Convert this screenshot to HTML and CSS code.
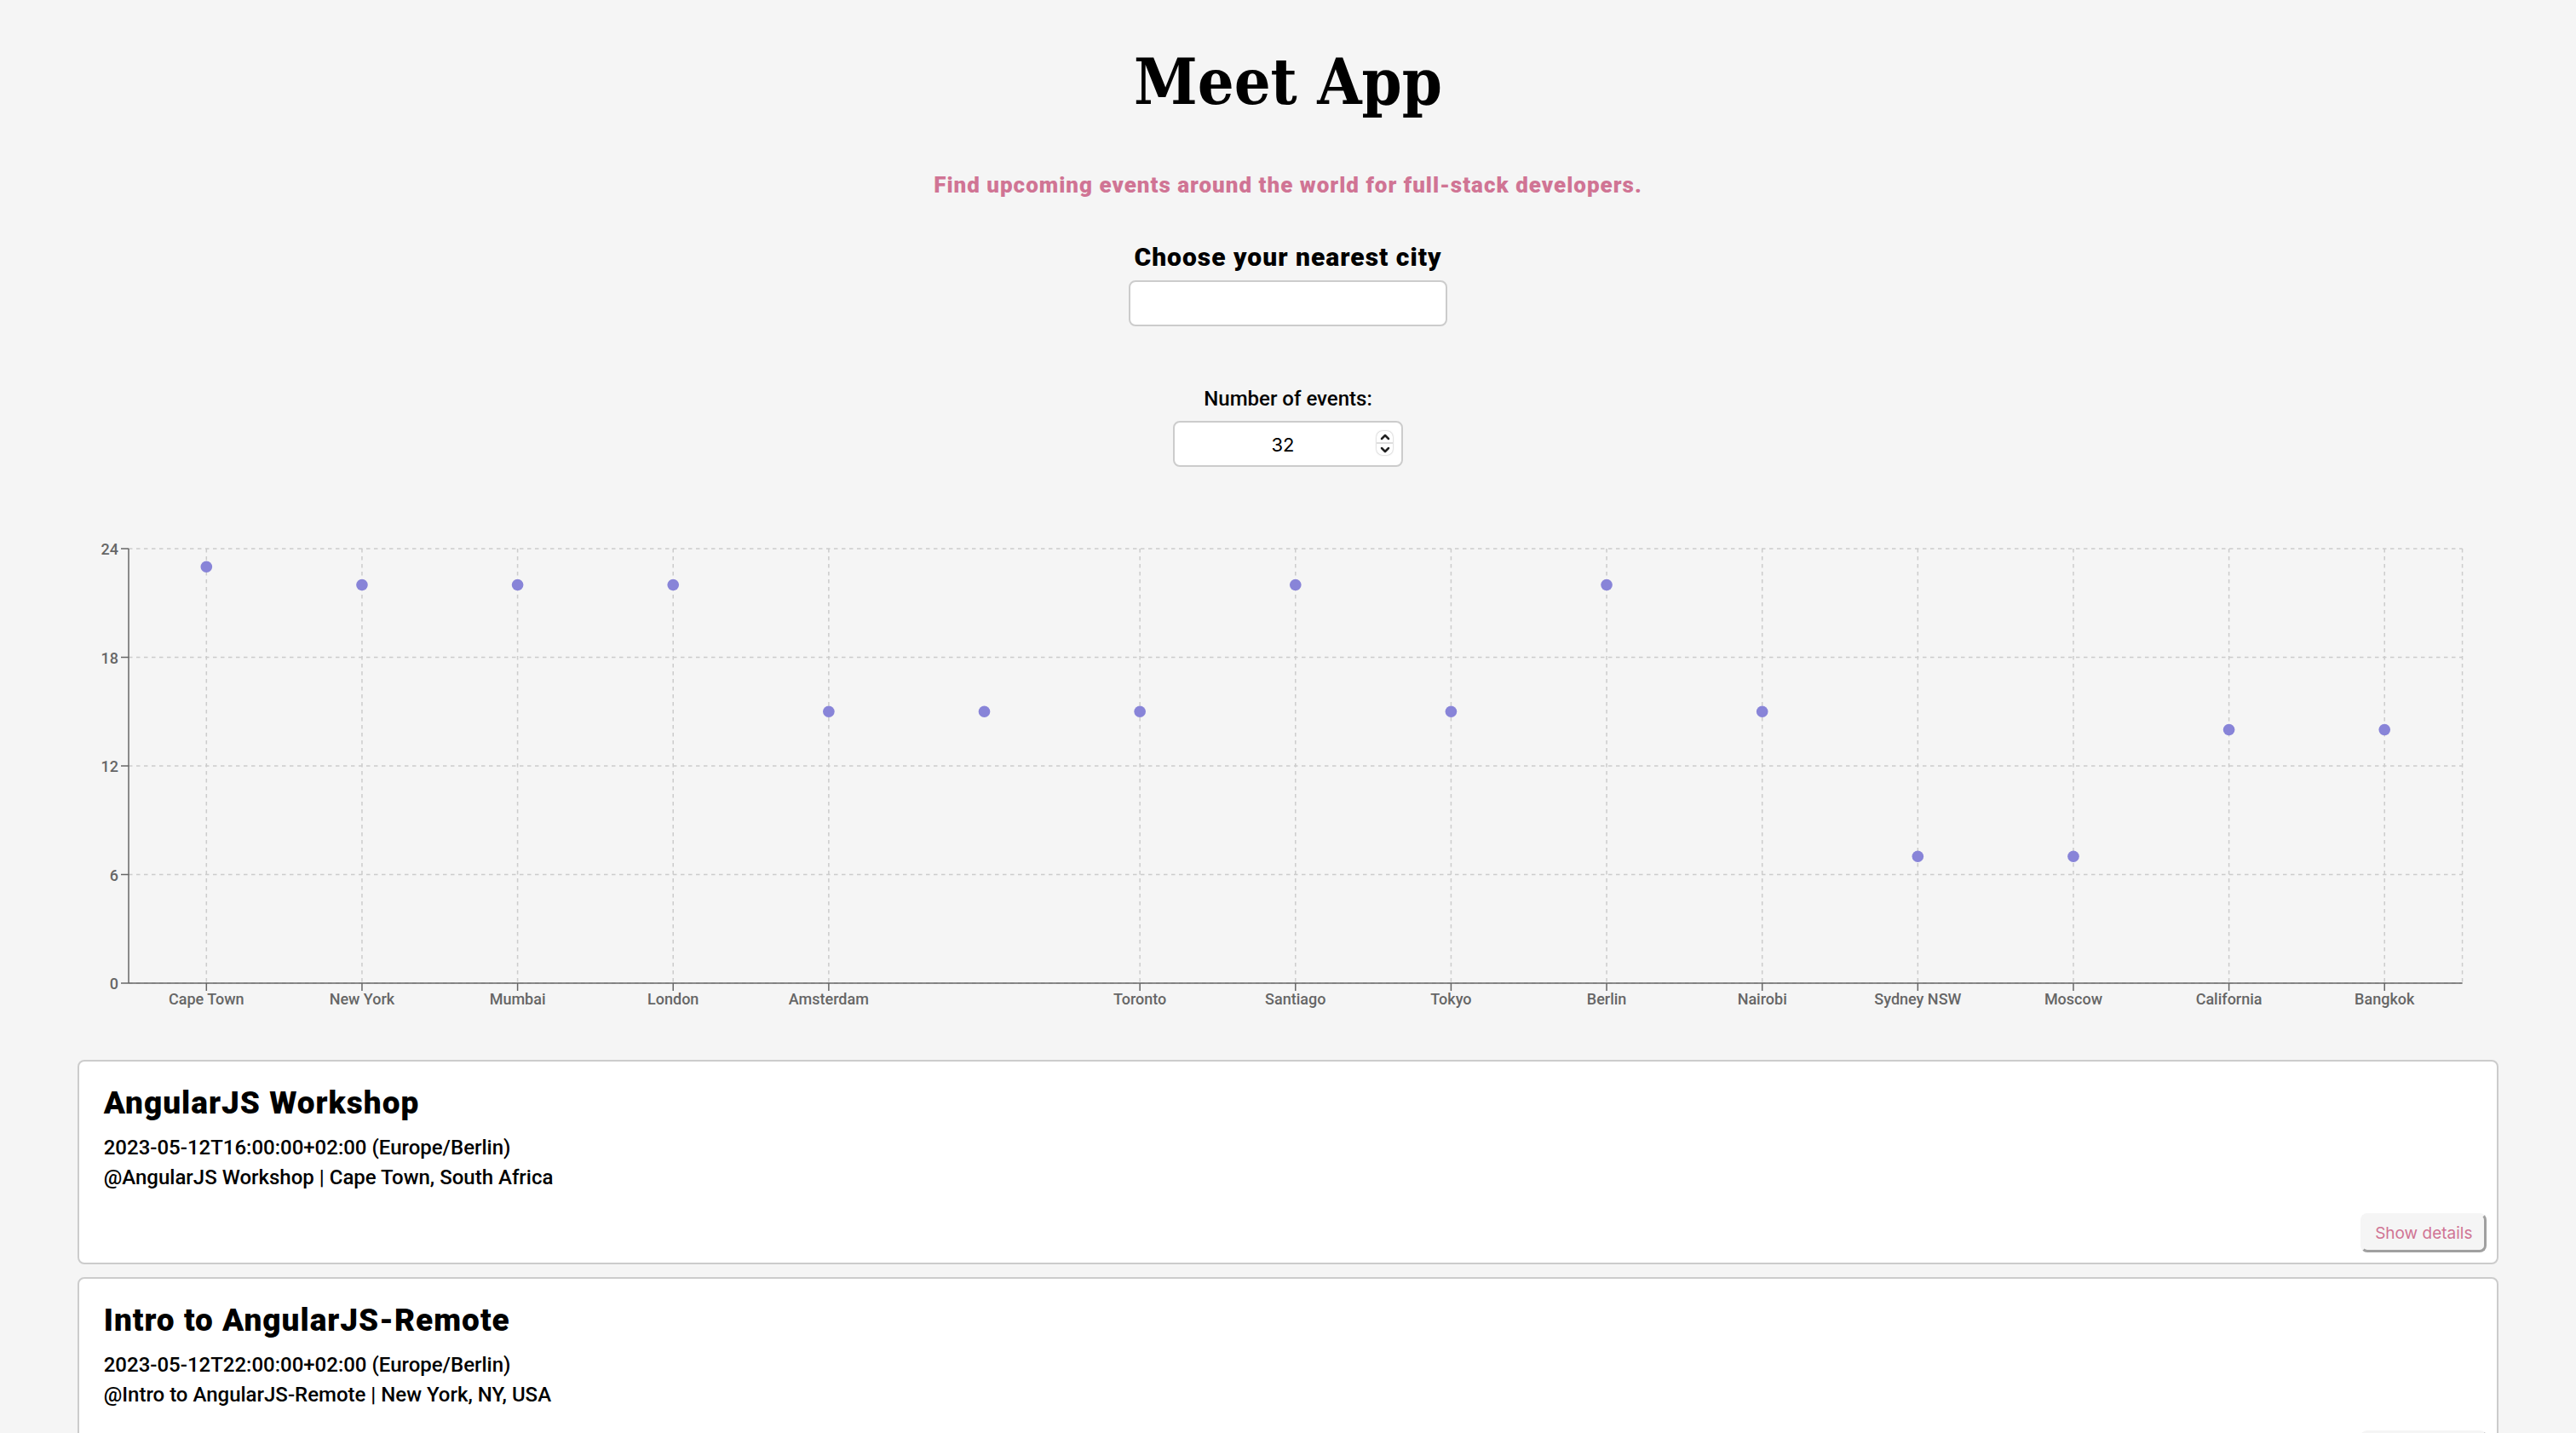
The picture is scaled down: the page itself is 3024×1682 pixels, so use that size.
FILE: index.html
```html
<!DOCTYPE html>
<html lang="en">
<head>
<meta charset="utf-8">
<meta name="viewport" content="width=device-width, initial-scale=1">
<title>Meet App</title>
<link rel="stylesheet" href="styles.css">
</head>
<body>
<main class="app">
  <header class="intro">
    <h1 class="app-title">Meet App</h1>
    <p class="tagline">Find upcoming events around the world for full-stack developers.</p>
  </header>

  <form class="filters">
    <div class="field">
      <label class="city-label" for="city">Choose your nearest city</label>
      <input class="control city" id="city" type="text">
    </div>
    <div class="field">
      <label class="count-label" for="count">Number of events:</label>
      <div class="count-box">
        <input class="control count" id="count" type="number" value="32">
        <div class="stepper">
          <button class="step" type="button" aria-label="Increase"><svg class="step-icon" viewBox="0 0 12 8"><path d="M2 6 6 2 10 6"/></svg></button>
          <button class="step" type="button" aria-label="Decrease"><svg class="step-icon" viewBox="0 0 12 8"><path d="M2 2 6 6 10 2"/></svg></button>
        </div>
      </div>
    </div>
  </form>

  <section class="chart" aria-label="Events per city">
    <svg class="plot" id="plot"></svg>
  </section>

  <ul class="events">
    <li class="event">
      <h2 class="event-title">AngularJS Workshop</h2>
      <p class="event-line">2023-05-12T16:00:00+02:00 (Europe/Berlin)</p>
      <p class="event-line">@AngularJS Workshop | Cape Town, South Africa</p>
      <button class="details" type="button">Show details</button>
    </li>
    <li class="event">
      <h2 class="event-title">Intro to AngularJS-Remote</h2>
      <p class="event-line">2023-05-12T22:00:00+02:00 (Europe/Berlin)</p>
      <p class="event-line">@Intro to AngularJS-Remote | New York, NY, USA</p>
      <button class="details" type="button">Show details</button>
    </li>
  </ul>
</main>
<script src="chart.js"></script>
</body>
</html>
```
FILE: styles.css
```css
* { box-sizing: border-box; }

body {
  margin: 0;
  background: #f5f5f5;
  color: #000;
  font: 500 24px/35px Roboto, sans-serif;
}

.app { padding: 42px 3% 0; }

.intro,
.filters {
  display: flex;
  flex-direction: column;
  align-items: center;
  text-align: center;
}

.app-title {
  margin: 0;
  font: 700 75px/108px "Roboto Slab", "DejaVu Serif Condensed", "DejaVu Serif", serif;
}

.tagline {
  margin: 49px 0 0;
  color: #d07494;
  font-size: 26px;
  font-weight: 900;
  line-height: 36px;
  letter-spacing: 1px;
}

.filters { gap: 68px; margin-top: 46px; }

.field {
  display: flex;
  flex-direction: column;
  align-items: center;
}

.city-label {
  margin-bottom: 6px;
  font-size: 30px;
  font-weight: 900;
  line-height: 42px;
  letter-spacing: 1px;
}

.count-label { margin-bottom: 8px; }

.control {
  height: 54px;
  padding: 0 16px;
  border: 2px solid #ccc;
  border-radius: 8px;
  background: #fff;
  color: #000;
  font: 400 22px Inter, sans-serif;
}

.city { width: 374px; }

.count-box { position: relative; }

.count {
  width: 270px;
  padding-top: 2px;
  padding-right: 28px;
  text-align: center;
  appearance: textfield;
}

.count::-webkit-inner-spin-button { display: none; }

.stepper {
  position: absolute;
  top: 12px;
  right: 12px;
  display: grid;
  gap: 2px;
  width: 19px;
  border-radius: 7px;
  background: #ddd;
  box-shadow: 0 0 2px #999;
  overflow: hidden;
}

.step {
  display: grid;
  place-items: center;
  height: 13px;
  padding: 0;
  border: 0;
  background: #fff;
}

.step-icon {
  width: 12px;
  height: 8px;
  fill: none;
  stroke: #222;
  stroke-width: 2.5;
  stroke-linecap: round;
  stroke-linejoin: round;
}

.chart { padding: 96px 43px 0 60px; }

.plot {
  display: block;
  width: 100%;
  height: 510px;
  overflow: visible;
  font-size: 18px;
}

.grid {
  stroke: #ccc;
  stroke-width: 1.5;
  stroke-dasharray: 4.5 4.5;
}

.axis { stroke: #666; stroke-width: 1.5; }
.tick { fill: #666; }
.tick-x { text-anchor: middle; }
.tick-y { text-anchor: end; }
.dot { fill: #8884d8; }

.events {
  display: grid;
  gap: 15px;
  margin: 90px 0 0;
  padding: 0;
  list-style: none;
}

.event {
  display: flex;
  flex-direction: column;
  padding: 24px 12px 12px 29px;
  border: 2px solid #ccc;
  border-radius: 8px;
  background: #fff;
}

.event-title {
  margin: 0 0 10px;
  font-size: 37px;
  font-weight: 900;
  line-height: 50px;
  letter-spacing: 1px;
}

.event-line { margin: 0; }

.details {
  align-self: flex-end;
  width: 148px;
  height: 46px;
  margin-top: 24px;
  padding: 0;
  border: 3px solid;
  border-color: #f5f5f5 #a0a0a0 #a0a0a0 #f5f5f5;
  border-radius: 8px;
  background: #f5f5f5;
  color: #d07494;
  font: 400 19px Inter, sans-serif;
}
```
FILE: chart.js
```js
const cities = [
  ["Cape Town", 23], ["New York", 22], ["Mumbai", 22], ["London", 22],
  ["Amsterdam", 15], ["", 15], ["Toronto", 15], ["Santiago", 22],
  ["Tokyo", 15], ["Berlin", 22], ["Nairobi", 15], ["Sydney NSW", 7],
  ["Moscow", 7], ["California", 14], ["Bangkok", 14]
];
const plot = document.getElementById("plot");
const height = 510;
const max = 24;

function add(name, attrs, text) {
  const node = document.createElementNS("http://www.w3.org/2000/svg", name);
  for (const key in attrs) node.setAttribute(key, attrs[key]);
  if (text !== undefined) node.textContent = text;
  plot.appendChild(node);
}

const yOf = value => height - value / max * height;
const xOf = index => (index + 0.5) / cities.length * 100 + "%";

for (let value = 0; value <= max; value += 6) {
  const y = yOf(value);
  add("line", { class: "grid", x1: 0, x2: "100%", y1: y, y2: y });
  add("line", { class: "axis", x1: -9, x2: 0, y1: y, y2: y });
  add("text", { class: "tick tick-y", x: -12, y: y + 7 }, value);
}
cities.forEach(([name], i) => {
  if (!name) return;
  const x = xOf(i);
  add("line", { class: "grid", x1: x, x2: x, y1: 0, y2: height });
  add("line", { class: "axis", x1: x, x2: x, y1: height, y2: height + 9 });
  add("text", { class: "tick tick-x", x, y: height + 25 }, name);
});
add("line", { class: "grid", x1: "100%", x2: "100%", y1: 0, y2: height });
add("line", { class: "axis", x1: 0, x2: 0, y1: 0, y2: height });
add("line", { class: "axis", x1: 0, x2: "100%", y1: height, y2: height });
cities.forEach(([, count], i) => {
  add("circle", { class: "dot", cx: xOf(i), cy: yOf(count), r: 6.8 });
});
```
